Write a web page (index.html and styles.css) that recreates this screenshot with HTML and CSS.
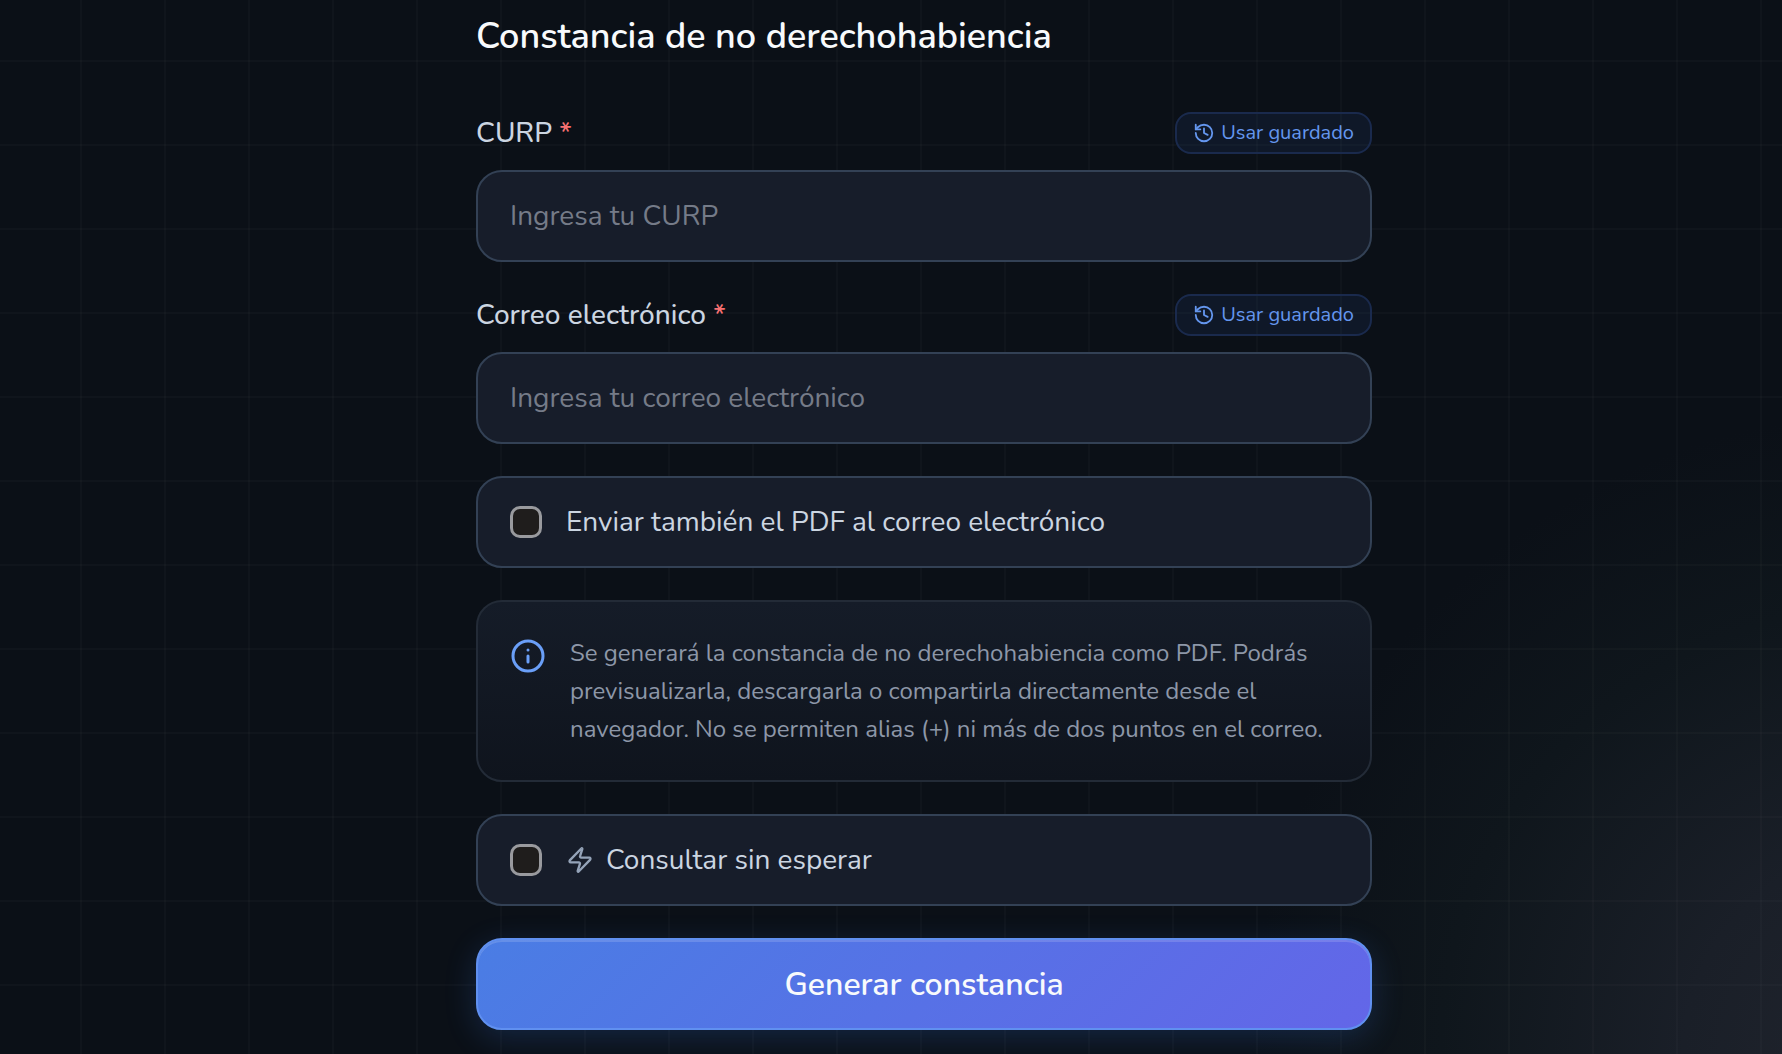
FILE: index.html
```html
<!DOCTYPE html>
<html lang="es">
<head>
  <meta charset="UTF-8">
  <meta name="viewport" content="width=device-width, initial-scale=1.0">
  <title>Constancia de no derechohabiencia</title>
  <link rel="stylesheet" href="styles.css">
</head>
<body>
  <main class="page">
    <form class="form">
      <h1 class="title">Constancia de no derechohabiencia</h1>

      <div class="field">
        <div class="field-head">
          <label for="curp">CURP <span class="required">*</span></label>
          <button type="button" class="saved">
            <svg class="icon" viewBox="0 0 24 24"><path d="M3 12a9 9 0 1 0 9-9 9.75 9.75 0 0 0-6.74 2.74L3 8"/><path d="M3 3v5h5"/><path d="M12 7v5l4 2"/></svg>
            Usar guardado
          </button>
        </div>
        <input type="text" id="curp" class="text-input" placeholder="Ingresa tu CURP">
      </div>

      <div class="field">
        <div class="field-head">
          <label for="correo">Correo electrónico <span class="required">*</span></label>
          <button type="button" class="saved">
            <svg class="icon" viewBox="0 0 24 24"><path d="M3 12a9 9 0 1 0 9-9 9.75 9.75 0 0 0-6.74 2.74L3 8"/><path d="M3 3v5h5"/><path d="M12 7v5l4 2"/></svg>
            Usar guardado
          </button>
        </div>
        <input type="email" id="correo" class="text-input" placeholder="Ingresa tu correo electrónico">
      </div>

      <label class="option">
        <input type="checkbox" class="check">
        <span>Enviar también el PDF al correo electrónico</span>
      </label>

      <div class="info">
        <svg class="icon" viewBox="0 0 24 24"><circle cx="12" cy="12" r="10"/><path d="M12 16v-4"/><path d="M12 8h.01"/></svg>
        <p>Se generará la constancia de no derechohabiencia como PDF. Podrás previsualizarla, descargarla o compartirla directamente desde el navegador. No se permiten alias (+) ni más de dos puntos en el correo.</p>
      </div>

      <label class="option">
        <input type="checkbox" class="check">
        <span class="fast">
          <svg class="icon" viewBox="0 0 24 24"><path d="M4 14a1 1 0 0 1-.78-1.63l9.9-10.2a.5.5 0 0 1 .86.46l-1.92 6.02A1 1 0 0 0 13 10h7a1 1 0 0 1 .78 1.63l-9.9 10.2a.5.5 0 0 1-.86-.46l1.92-6.02A1 1 0 0 0 11 14z"/></svg>
          Consultar sin esperar
        </span>
      </label>

      <button type="submit" class="submit">Generar constancia</button>
    </form>
  </main>
</body>
</html>
```
FILE: styles.css
```css
* {
  box-sizing: border-box;
  margin: 0;
  padding: 0;
}
body {
  min-height: 100vh;
  /* grid lines over the corner glow */
  background-color: #0b1017;
  background-image:
    linear-gradient(to right, rgba(255, 255, 255, 0.02) 2px, transparent 2px),
    linear-gradient(to bottom, rgba(255, 255, 255, 0.02) 2px, transparent 2px),
    radial-gradient(circle 640px at 106% 100%, #20242d 0%, #1a1f28 32%, #0f161c 70%, transparent 100%);
  background-size: 84px 84px, 84px 84px, 100% 100%;
  background-position: 80px 60px, 80px 60px, 0 0;
  color: #cbd5e1;
  font-family: Nunito, Lato, "Open Sans", sans-serif;
  font-size: 28px;
}
button,
input {
  font: inherit;
  color: inherit;
}
.icon {
  flex: none;
  fill: none;
  stroke: currentColor;
  stroke-width: 2;
  stroke-linecap: round;
  stroke-linejoin: round;
}
.page {
  padding: 12px 0 24px 66px;
}
.form {
  display: flex;
  flex-direction: column;
  gap: 32px;
  max-width: 896px;
  margin: 0 auto;
}
.title {
  margin-bottom: 18px;
  font-size: 36px;
  font-weight: 600;
  line-height: 50px;
  color: #f8fafc;
}
.field {
  display: flex;
  flex-direction: column;
  gap: 16px;
}
.field-head {
  display: flex;
  align-items: center;
  justify-content: space-between;
  line-height: 40px;
}
.field-head label {
  font-weight: 500;
}
.required {
  color: #f87171;
}
.saved {
  display: flex;
  align-items: center;
  gap: 6px;
  height: 42px;
  padding: 0 16px;
  border: 2px solid #1a2a4d;
  border-radius: 16px;
  background: rgba(59, 130, 246, 0.08);
  color: #6496ee;
  font-size: 20px;
  cursor: pointer;
}
.saved .icon {
  width: 22px;
  height: 22px;
}
.text-input,
.option {
  width: 100%;
  height: 92px;
  padding: 0 32px;
  border: 2px solid #334155;
  border-radius: 26px;
  background: #171d2a;
}
.text-input {
  outline: none;
}
.text-input:focus {
  border-color: #3b82f6;
}
.text-input::placeholder {
  color: #757b88;
}
.option {
  display: flex;
  align-items: center;
  gap: 24px;
  cursor: pointer;
}
.check {
  appearance: none;
  flex: none;
  width: 32px;
  height: 32px;
  border: 3px solid #999a9e;
  border-radius: 10px;
  background: #1f1d1c;
}
.check:checked {
  background: #3b82f6;
}
.fast {
  display: flex;
  align-items: center;
  gap: 12px;
}
.fast .icon {
  width: 28px;
  height: 28px;
  color: #94a3b8;
}
.info {
  display: flex;
  gap: 24px;
  padding: 32px;
  border: 2px solid #232b37;
  border-radius: 26px;
  background: linear-gradient(#151c28, #0f141d);
}
.info .icon {
  width: 36px;
  height: 36px;
  margin-top: 4px;
  color: #6a9ff8;
}
.info p {
  font-size: 24px;
  line-height: 38px;
  color: #8d97a8;
}
.submit {
  height: 92px;
  border: 2px solid #6090f0;
  border-radius: 26px;
  background: linear-gradient(135deg, #4a7de4, #6366e8) border-box;
  box-shadow: 0 8px 32px rgba(59, 130, 246, 0.2), inset 0 2px 0 rgba(255, 255, 255, 0.15);
  color: #f8fafc;
  font-size: 32px;
  font-weight: 600;
  cursor: pointer;
}
```
